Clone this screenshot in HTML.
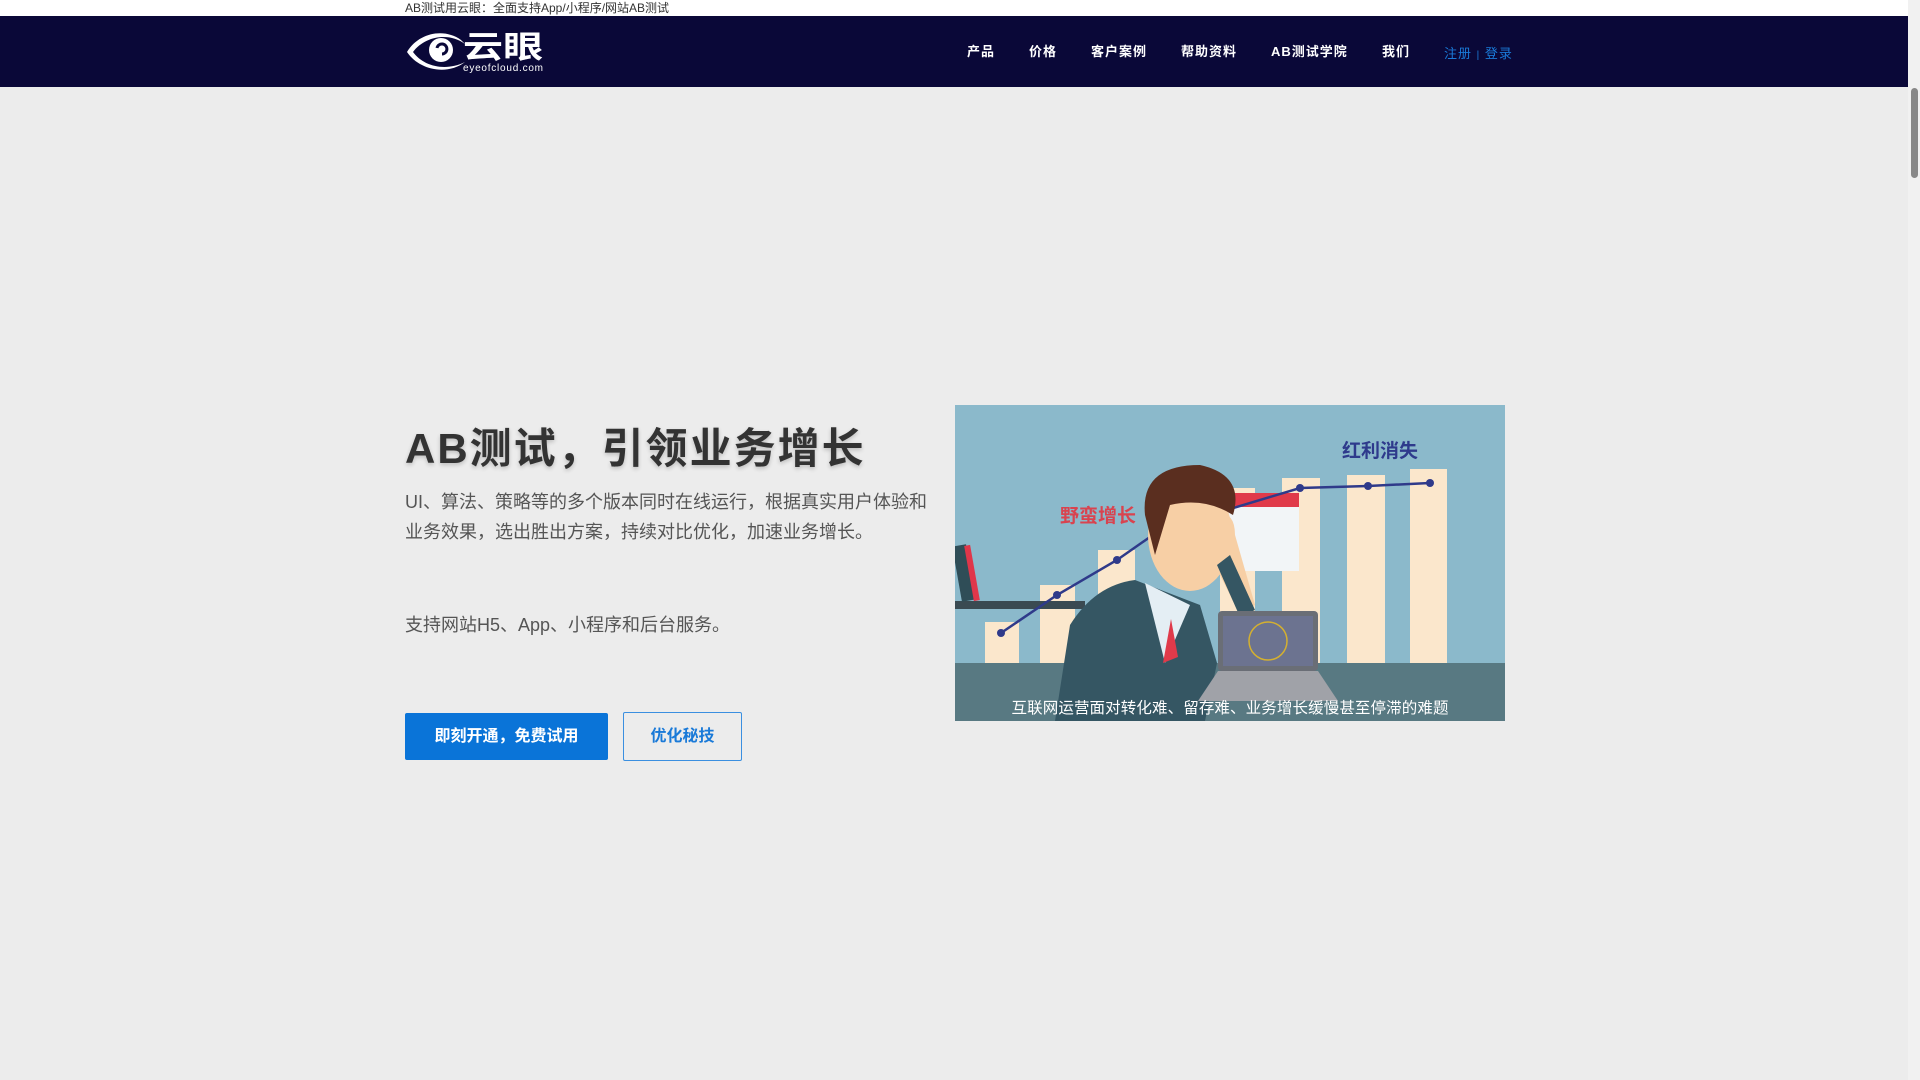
<!DOCTYPE html>
<html><head><meta charset="utf-8"><style>
*{margin:0;padding:0;box-sizing:border-box}
body{width:1920px;height:1080px;background:#ececec;font-family:"Liberation Sans","Noto Sans CJK SC",sans-serif;overflow:hidden;position:relative}
.top{position:absolute;left:0;top:0;width:1908px;height:16px;background:#fff;font-size:12px;color:#333;line-height:16px;padding-left:405px}
.nav{position:absolute;left:0;top:16px;width:1908px;height:71px;background:#0a0838}
.nav a{position:absolute;top:25px;color:#fff;font-size:13px;font-weight:bold;text-decoration:none;letter-spacing:1px}
.sb{position:absolute;right:0;top:0;width:12px;height:1080px;background:#f1f1f1}
.sb i{position:absolute;left:3px;top:88px;width:7px;height:90px;background:#888;border-radius:4px}
h1{position:absolute;left:405px;top:415px;font-size:42px;font-weight:bold;color:#333;letter-spacing:2px;text-shadow:0 2px 4px rgba(0,0,0,.2);white-space:nowrap}
.p{position:absolute;left:405px;font-size:18px;color:#555;line-height:30px;white-space:nowrap}
.b1{position:absolute;left:405px;top:713px;width:203px;height:47px;background:#0a74d8;color:#fff;font-size:16px;font-weight:bold;text-align:center;line-height:47px;border-radius:2px}
.b2{position:absolute;left:623px;top:712px;width:119px;height:49px;border:1px solid #3a8fe0;color:#1a7ad8;font-size:16px;font-weight:bold;text-align:center;line-height:47px;border-radius:2px}
.img{position:absolute;left:955px;top:405px;width:550px;height:316px}
</style></head><body>
<div class="top">AB测试用云眼：全面支持App/小程序/网站AB测试</div>
<div class="nav">
<svg style="position:absolute;left:405px;top:10px" width="142" height="48" viewBox="0 0 142 48">
<path d="M2 26 C14 6 40 2 56 14 L60 18 C44 6 20 10 8 26 C18 40 40 46 60 36 C42 50 14 44 2 26Z" fill="#fff"/>
<circle cx="36" cy="24" r="12" fill="#fff"/><path d="M32 22a5 5 0 1 1 5 6" stroke="#0a0838" stroke-width="3" fill="none"/>
<text x="58" y="32" font-size="31" font-weight="bold" fill="#fff" font-family="Noto Sans CJK SC" textLength="80" lengthAdjust="spacingAndGlyphs">云眼</text>
<text x="58" y="45" font-size="10" fill="#fff" font-family="Liberation Sans" textLength="80">eyeofcloud.com</text>
</svg>
<a style="left:967px">产品</a><a style="left:1029px">价格</a><a style="left:1091px">客户案例</a><a style="left:1181px">帮助资料</a><a style="left:1271px">AB测试学院</a><a style="left:1382px">我们</a>
<a style="left:1444px;top:27px;color:#1a7ad8;font-weight:normal">注册 <span style="font-size:10px">|</span> 登录</a>
</div>
<div class="sb"><i></i></div>
<h1>AB测试，引领业务增长</h1>
<div class="p" style="top:487px">UI、算法、策略等的多个版本同时在线运行，根据真实用户体验和<br>业务效果，选出胜出方案，持续对比优化，加速业务增长。</div>
<div class="p" style="top:610px">支持网站H5、App、小程序和后台服务。</div>
<div class="b1">即刻开通，免费试用</div>
<div class="b2">优化秘技</div>
<svg class="img" viewBox="0 0 550 316">
<rect width="550" height="316" fill="#8bb9cb"/>
<g fill="#fbe7cc"><rect x="30" y="217" width="34" height="50"/><rect x="85" y="180" width="35" height="90"/><rect x="143" y="145" width="37" height="120"/><rect x="265" y="83" width="35" height="180"/><rect x="327" y="73" width="38" height="190"/><rect x="392" y="70" width="38" height="190"/><rect x="455" y="64" width="37" height="200"/></g>
<rect x="0" y="196" width="130" height="8" fill="#3a4a52"/>
<rect x="2" y="140" width="14" height="56" fill="#2f4d57" transform="rotate(-10 9 168)"/><rect x="14" y="140" width="6" height="56" fill="#e0364a" transform="rotate(-10 17 168)"/>
<rect x="272" y="88" width="72" height="78" fill="#f2f5f7"/><rect x="272" y="88" width="72" height="14" fill="#e03a4a"/>
<polyline points="46,228 102,190 162,155 205,125 345,83 413,81 475,78" fill="none" stroke="#2f3a8a" stroke-width="2.5"/>
<g fill="#2f3a8a"><circle cx="46" cy="228" r="4"/><circle cx="102" cy="190" r="4"/><circle cx="162" cy="155" r="4"/><circle cx="345" cy="83" r="4"/><circle cx="413" cy="81" r="4"/><circle cx="475" cy="78" r="4"/></g>
<text x="105" y="117" font-size="19" font-weight="bold" fill="#d9434f" font-family="Noto Sans CJK SC">野蛮增长</text>
<text x="387" y="52" font-size="19" font-weight="bold" fill="#2e3a8c" font-family="Noto Sans CJK SC">红利消失</text>
<rect x="0" y="258" width="550" height="58" fill="#587982"/>
<path d="M100 316 L115 220 Q140 180 180 175 L245 200 L262 258 L250 316Z" fill="#355663"/>
<path d="M190 178 L210 258 L235 200Z" fill="#e4eef4"/><path d="M216 214 L208 258 L223 252Z" fill="#e03a4a"/>
<ellipse cx="235" cy="130" rx="42" ry="56" fill="#f7cfa5"/>
<path d="M200 150 L190 110 Q185 60 245 60 Q290 70 278 110 Q250 92 215 100Z" fill="#5a2e1f"/>
<path d="M250 110 Q280 100 280 130 L300 200 L285 210 L250 140Z" fill="#f7cfa5"/>
<path d="M275 150 L300 205 L285 212 L262 160Z" fill="#355663"/>
<rect x="263" y="206" width="100" height="60" rx="4" fill="#6a6e76"/><rect x="268" y="211" width="90" height="50" fill="#6c7390"/>
<circle cx="313" cy="236" r="19" fill="none" stroke="#d4b030" stroke-width="1.5"/>
<path d="M243 296 L263 266 L363 266 L383 296Z" fill="#a0a2a8"/>
<text x="275" y="308" text-anchor="middle" font-size="15.5" fill="#fff" font-family="Noto Sans CJK SC" textLength="437">互联网运营面对转化难、留存难、业务增长缓慢甚至停滞的难题</text>
</svg>
</body></html>
